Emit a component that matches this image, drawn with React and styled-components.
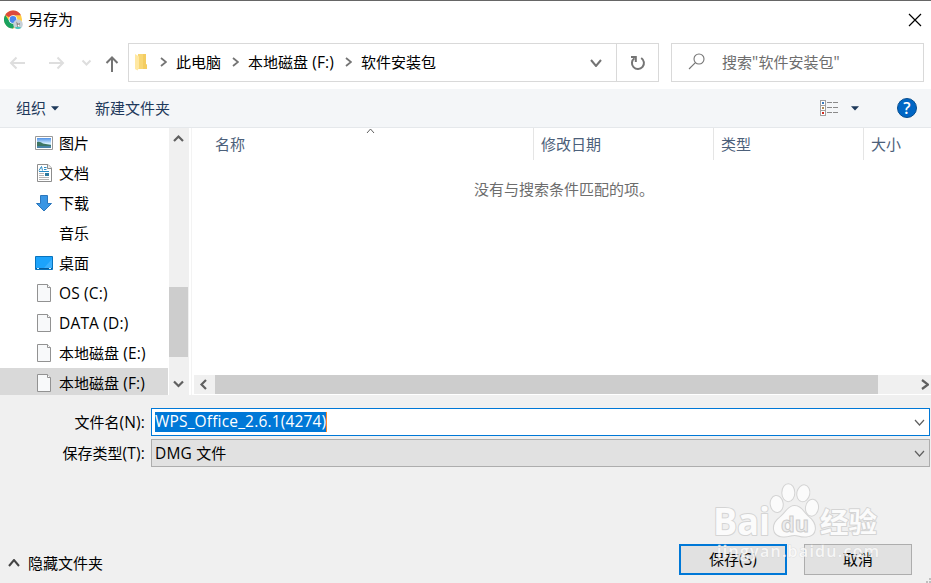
import React from "react";
import styled, { createGlobalStyle } from "styled-components";

const Global = createGlobalStyle`
  * { box-sizing: border-box; }
  body { margin: 0; overflow: hidden; background: #fff; }
  svg { display: block; flex: none; }
`;

const Dialog = styled.div`
  position: relative;
  width: 931px;
  height: 583px;
  display: flex;
  flex-direction: column;
  overflow: hidden;
  border-top: 1px solid #666;
  background: #fff;
  color: #000;
  font: 15px/20px "Open Sans", "Noto Sans CJK SC", sans-serif;
  white-space: nowrap;
`;

const Latin = styled.span`
  font-size: 15.5px;
  line-height: 1;
  letter-spacing: 0.17px;
  white-space: pre;
`;

const TitleBar = styled.header`
  flex: none;
  height: 42px;
  padding: 0 9px 4px 4px;
  display: flex;
  align-items: center;
`;
const Title = styled.span`
  flex: 1;
  margin: 0 0 2px 5px;
`;

const NavBar = styled.nav`
  flex: none;
  height: 46px;
  padding-right: 7px;
  display: flex;
  align-items: flex-start;
`;
const NavArrows = styled.div`
  width: 128px;
  height: 39px;
  flex: none;
`;
const AddressBar = styled.div`
  width: 531px;
  height: 39px;
  border: 1px solid #d9d9d9;
  display: flex;
  align-items: center;
`;
const Crumbs = styled.div`
  flex: 1;
  display: flex;
  align-items: center;
  padding: 0 0 1px 5px;
`;
const Crumb = styled.span`
  width: ${(p) => p.$w}px;
`;
const CrumbArrow = styled.span`
  width: ${(p) => p.$w ?? 23}px;
  padding-left: ${(p) => p.$pad ?? 6.5}px;
`;
const DropArea = styled.div`
  width: 41px;
  display: flex;
  justify-content: center;
`;
const Refresh = styled.div`
  width: 42px;
  height: 37px;
  border-left: 1px solid #d9d9d9;
  display: flex;
  align-items: center;
  justify-content: center;
`;
const SearchBox = styled.div`
  width: 253px;
  height: 39px;
  margin-left: 12px;
  padding: 0 0 2px 16px;
  border: 1px solid #d9d9d9;
  display: flex;
  align-items: center;
  gap: 16px;
  color: #6d6d6d;
`;

const Toolbar = styled.div`
  flex: none;
  height: 39px;
  padding: 0 14px 0 16px;
  display: flex;
  align-items: center;
  background: #f4f6f8;
  border-bottom: 1px solid #e5e8eb;
  color: #1e395b;
`;
const ToolItem = styled.div`
  display: flex;
  align-items: center;
  gap: 5px;
  margin-right: ${(p) => p.$mr ?? 0}px;
`;
const Grow = styled.div`
  flex: 1;
`;

const Body = styled.main`
  flex: none;
  height: 267px;
  display: flex;
  overflow: hidden;
`;
const Tree = styled.ul`
  width: 168px;
  margin: 0;
  padding: 0;
  list-style: none;
`;
const TreeRow = styled.li`
  height: 30px;
  padding-left: 35px;
  display: flex;
  align-items: center;
  background: ${(p) => (p.$selected ? "#d9d9d9" : "transparent")};
`;
const IconSlot = styled.span`
  width: 24px;
`;
const VScroll = styled.div`
  width: 20px;
  margin-left: 1px;
  display: flex;
  flex-direction: column;
  align-items: flex-start;
  justify-content: space-between;
  background: #f0f0f0;
`;
const VThumb = styled.div`
  width: 19px;
  height: 70px;
  margin-top: 120px;
  background: #cdcdcd;
`;
const Pane = styled.section`
  flex: 1;
  margin-left: 2px;
  border-left: 1px solid #f3f3f3;
  display: flex;
  flex-direction: column;
`;
const Columns = styled.div`
  height: 32px;
  display: flex;
  color: #4c607a;
`;
const Column = styled.div`
  position: relative;
  width: ${(p) => p.$w}px;
  padding: 6px 0 0 ${(p) => p.$pad ?? 7}px;
  border-right: ${(p) => (p.$last ? "none" : "1px solid #e5e5e5")};
`;
const SortMark = styled.span`
  position: absolute;
  left: 174px;
  top: 0;
`;
const EmptyNote = styled.p`
  flex: 1;
  margin: 0;
  padding: 19px 0 0 282px;
  color: #6d6d6d;
`;
const HScroll = styled.div`
  height: 19px;
  margin: 0 0 1px 2px;
  display: flex;
  align-items: center;
  background: #f0f0f0;
`;
const HThumb = styled.div`
  width: 663px;
  height: 19px;
  margin: 0 43px 0 6px;
  background: #cdcdcd;
`;

const Footer = styled.footer`
  flex: 1;
  padding: 13px 1px 0 0;
  display: flex;
  flex-direction: column;
  background: #f0f0f0;
`;
const Field = styled.div`
  height: 28px;
  margin-bottom: 3px;
  display: flex;
  align-items: center;
`;
const FieldLabel = styled.label`
  width: 151px;
  padding-right: 6px;
  text-align: right;
`;
const Combo = styled.div`
  flex: 1;
  height: 28px;
  padding: 0 4px 0 3px;
  border: 1px solid ${(p) => (p.$active ? "#0078d7" : "#adadad")};
  background: ${(p) => (p.$active ? "#fff" : "#e1e1e1")};
  display: flex;
  align-items: center;
  justify-content: space-between;
`;
const Selected = styled.span`
  width: 172px;
  height: 20px;
  line-height: 19px;
  margin-bottom: 1px;
  background: #0078d7;
  border-right: 1px solid #ff8728;
  color: #fff;
`;
const Actions = styled.div`
  display: flex;
  align-items: flex-start;
  margin-top: 74px;
  padding-right: 18px;
`;
const HideFolders = styled.div`
  flex: 1;
  display: flex;
  align-items: center;
  gap: 8px;
  padding: 9px 0 0 8px;
`;
const Button = styled.button`
  width: 108px;
  height: 31px;
  margin-left: ${(p) => (p.$primary ? 0 : 17)}px;
  padding: 0 0 1px;
  border: ${(p) => (p.$primary ? "2px solid #0078d7" : "1px solid #adadad")};
  background: #e1e1e1;
  font: inherit;
  color: #000;
`;
const Watermark = styled.svg`
  position: absolute;
  left: 708px;
  top: 476px;
  pointer-events: none;
`;
const Grip = styled.svg`
  position: absolute;
  right: 0;
  bottom: 0;
`;

const Chevron = ({ w = 12, h = 7, color = "#606060", sw = 2, dir = "down" }) => {
  const paths = {
    down: `M1 1L${w / 2} ${h - 1}L${w - 1} 1`,
    up: `M1 ${h - 1}L${w / 2} 1L${w - 1} ${h - 1}`,
    right: `M1 1L${w - 1} ${h / 2}L1 ${h - 1}`,
    left: `M${w - 1} 1L1 ${h / 2}L${w - 1} ${h - 1}`,
  };
  return (
    <svg width={w} height={h}>
      <path d={paths[dir]} fill="none" stroke={color} strokeWidth={sw} />
    </svg>
  );
};

const Caret = () => (
  <svg width="8" height="5"><path d="M0 .3H8L4 4.6Z" fill="#1e395b" /></svg>
);

const ChromeIcon = () => (
  <svg width="19" height="20" viewBox="0 0 19 20">
    <circle cx="9" cy="9.5" r="9" fill="#ffcd42" />
    <path d="M9 9.5L1.2 5A9 9 0 0 1 17 5.3H9Z" fill="#dc4a3e" />
    <path d="M1.2 5A9 9 0 0 0 9 18.5L12.5 12L5.3 11Z" fill="#1aa260" />
    <circle cx="9" cy="9.5" r="4.3" fill="#fff" />
    <circle cx="9" cy="9.5" r="3.4" fill="#4a86ee" />
    <circle cx="14" cy="14.4" r="4.8" fill="#c7d0d8" />
    <path d="M10.5 17.7Q14 15.8 17.4 17.7Q14 20.5 10.5 17.7" fill="#46c6bd" />
    <path d="M12.2 11.5l2 2.2 1.8-.8-.6 3.6-2.2.4Z" fill="#8b827b" />
    <path d="M13.6 15l1.6-.5.3 2h-1.6Z" fill="#fff" />
  </svg>
);

const NavIcons = () => (
  <svg width="128" height="39" fill="none" strokeWidth="2">
    <g stroke="#dedede">
      <path d="M11 20H25M16.5 14.5L11 20L16.5 25.5" />
      <path d="M49 20H63M57.5 14.5L63 20L57.5 25.5" />
      <path d="M82.5 17.5L86.5 21.5L90.5 17.5" />
    </g>
    <path d="M112 29V15M106.5 20L112 14.5L117.5 20" stroke="#747474" />
  </svg>
);

const FolderIcon = () => (
  <svg width="13" height="18">
    <path d="M4 1H12V11L13 12V16H4Z" fill="#f8d775" />
    <path d="M9 1H12V11L13 12V16H9Z" fill="#f4cd62" />
    <path d="M1 1L5 3.5V15L3.5 17.5L1 16Z" fill="#ffe8a2" />
  </svg>
);

const RefreshIcon = () => (
  <svg width="16" height="16" fill="none" stroke="#747474" strokeWidth="2">
    <path d="M11.2 3A6 6 0 1 1 4.4 3.2" />
    <path d="M1 2H5.8V7" />
  </svg>
);

const SearchIcon = () => (
  <svg width="18" height="17" fill="none" stroke="#757575" strokeWidth="1.1">
    <circle cx="11" cy="6" r="5" />
    <path d="M7.4 9.6L1 16" />
  </svg>
);

const ViewIcon = () => (
  <svg width="18" height="16" shapeRendering="crispEdges">
    <path d="M.5.5H5.5V15.5H.5ZM.5 5.5H5.5M.5 10.5H5.5" fill="#fff" stroke="#a0a0a0" />
    <path d="M7 2.5H12M13 2.5H18M7 7.5H12M13 7.5H18M7 12.5H12M13 12.5H18" stroke="#8a8a8a" />
    <path d="M2 2H4V4H2Z" fill="#3879bd" />
    <path d="M2 7H4V9H2Z" fill="#b08b55" />
    <path d="M2 12H4V14H2Z" fill="#d02a1e" />
  </svg>
);

const HelpIcon = () => (
  <svg width="20" height="20">
    <circle cx="10" cy="10" r="9.5" fill="#0066c5" stroke="#064d8e" />
    <text x="10" y="15.5" textAnchor="middle" fontSize="16" fontWeight="600" fill="#fff">?</text>
  </svg>
);

const PictureIcon = () => (
  <svg width="18" height="14">
    <defs>
      <linearGradient id="sky" x2="0" y2="1">
        <stop stopColor="#4f91e6" /><stop offset=".55" stopColor="#d5efff" /><stop offset="1" stopColor="#6aa3c9" />
      </linearGradient>
    </defs>
    <path d="M.5.5H17.5V13.5H.5Z" fill="#fff" stroke="#999" />
    <path d="M2 2H16V12H2Z" fill="url(#sky)" />
    <path d="M2 6Q5 5 8 7.5L16 9V10H2Z" fill="#3d7663" />
    <path d="M2 10H16V12H2Z" fill="#4783a8" />
  </svg>
);

const DocIcon = () => (
  <svg width="18" height="18">
    <path d="M2.5.5H13L16.5 4V17.5H2.5Z" fill="#fff" stroke="#8d8d8d" />
    <path d="M12.5.5V4.5H16.5" fill="#eee" stroke="#8d8d8d" />
    <path d="M4 6.5L6.5 2.5L7.5 6.5M9 3.5H11.5M9 5.5H11.5M4 7.5H14" fill="none" stroke="#2a8bc4" />
    <path d="M4 9.5H9M4 11.5H9M4 13.5H14M4 15.5H14" stroke="#b5b5b5" />
    <path d="M10 9H14V12H10Z" fill="#2e7a9f" />
  </svg>
);

const DownloadIcon = () => (
  <svg width="18" height="18">
    <path d="M5.5 1.5H12.5V9.5H16.5L9 17L1.5 9.5H5.5Z" fill="#3a96e4" stroke="#2b77bd" />
  </svg>
);

const DesktopIcon = () => (
  <svg width="18" height="14">
    <path d="M.5.5H17.5V13.5H.5Z" fill="#1ca3fb" stroke="#0873bd" />
    <path d="M9 12L17 3V12Z" fill="#3bb0fd" />
    <path d="M1 12.5H17" stroke="#075c9c" />
    <path d="M2 12.5H4M14 12.5H16" stroke="#d9f1ff" />
  </svg>
);

const FileIcon = () => (
  <svg width="18" height="18">
    <path d="M2.5.5H12.5L15.5 3.5V17.5H2.5Z" fill="#f8f9fa" stroke="#929292" />
    <path d="M12.5.5V3.5H15.5" fill="#fff" stroke="#929292" />
  </svg>
);

const places = [
  { text: "图片", icon: PictureIcon },
  { text: "文档", icon: DocIcon },
  { text: "下载", icon: DownloadIcon },
  { text: "音乐" },
  { text: "桌面", icon: DesktopIcon },
  { latin: "OS (C:)", icon: FileIcon },
  { latin: "DATA (D:)", icon: FileIcon },
  { text: "本地磁盘", latin: " (E:)", icon: FileIcon },
  { text: "本地磁盘", latin: " (F:)", icon: FileIcon, selected: true },
];

const Brand = () => (
  <Watermark width="180" height="92" fontFamily="Open Sans, Noto Sans CJK SC, sans-serif">
    <g fill="#fbfbfb" stroke="#d4d4d4" strokeWidth="2" paintOrder="stroke" strokeLinejoin="round">
      <text x="5" y="58" fontSize="37" fontWeight="700" textLength="57" lengthAdjust="spacingAndGlyphs">Bai</text>
      <ellipse cx="68.7" cy="27" rx="6" ry="8" transform="rotate(-8 68.7 27)" />
      <ellipse cx="80.300" cy="15.700" rx="6" ry="8.500" />
      <ellipse cx="95.300" cy="16.300" rx="6" ry="8" transform="rotate(12 95.300 16.300)" />
      <ellipse cx="104" cy="30.700" rx="6" ry="8" transform="rotate(8 104 30.700)" />
      <path d="M86.500 29C93 29 95 35 100 39.500C110 47 109 59 98 59.500C93 60 90 58 86.500 58C82 58 80 60 75 59.500C64 59 63 47 72 40.500C78 36 80 29 86.500 29Z" />
      <text x="112" y="56" fontSize="28" fontWeight="700" textLength="57" lengthAdjust="spacingAndGlyphs">经验</text>
    </g>
    <text x="73" y="54.500" fontSize="22" fontWeight="700" fill="#ececec" stroke="#cccccc" textLength="28" lengthAdjust="spacingAndGlyphs">du</text>
    <text x="9" y="80" fontSize="16" fontWeight="600" fill="#fff" fillOpacity=".75" stroke="#d4d4d4" strokeOpacity=".6" strokeWidth="1" paintOrder="stroke" textLength="162">jingyan.baidu.com</text>
  </Watermark>
);

export default function App() {
  return (
    <Dialog>
      <Global />
      <TitleBar>
        <ChromeIcon />
        <Title>另存为</Title>
        <svg width="14" height="14"><path d="M1 1L13 13M13 1L1 13" stroke="#000" strokeWidth="1.2" /></svg>
      </TitleBar>

      <NavBar>
        <NavArrows><NavIcons /></NavArrows>
        <AddressBar>
          <Crumbs>
            <FolderIcon />
            <CrumbArrow $w={29} $pad={12.5}><Chevron w={7} h={10} dir="right" color="#747474" sw={1.8} /></CrumbArrow>
            <Crumb $w={49}>此电脑</Crumb>
            <CrumbArrow><Chevron w={7} h={10} dir="right" color="#747474" sw={1.8} /></CrumbArrow>
            <Crumb $w={90}>本地磁盘<Latin> (F:)</Latin></Crumb>
            <CrumbArrow><Chevron w={7} h={10} dir="right" color="#747474" sw={1.8} /></CrumbArrow>
            <span>软件安装包</span>
          </Crumbs>
          <DropArea><Chevron color="#747474" h={8} /></DropArea>
          <Refresh><RefreshIcon /></Refresh>
        </AddressBar>
        <SearchBox><SearchIcon /><span>搜索<Latin>"</Latin>软件安装包<Latin>"</Latin></span></SearchBox>
      </NavBar>

      <Toolbar>
        <ToolItem $mr={36}>组织 <Caret /></ToolItem>
        <ToolItem>新建文件夹</ToolItem>
        <Grow />
        <ToolItem $mr={13}><ViewIcon /></ToolItem>
        <ToolItem $mr={38}><Caret /></ToolItem>
        <HelpIcon />
      </Toolbar>

      <Body>
        <Tree>
          {places.map(({ text, latin, icon: Icon, selected }) => (
            <TreeRow key={(text || "") + (latin || "")} $selected={selected}>
              <IconSlot>{Icon && <Icon />}</IconSlot>
              <span>{text}{latin && <Latin>{latin}</Latin>}</span>
            </TreeRow>
          ))}
        </Tree>
        <VScroll>
          <svg width="19" height="20"><path d="M5 13L9.500 8.500L14 13" fill="none" stroke="#606060" strokeWidth="2.200" /></svg>
          <VThumb />
          <svg width="19" height="20"><path d="M5 6.500L9.500 11L14 6.500" fill="none" stroke="#606060" strokeWidth="2.200" /></svg>
        </VScroll>
        <Pane>
          <Columns>
            <Column $w={342} $pad={23}>
              名称
              <SortMark><Chevron w={9} h={6} dir="up" sw={1} /></SortMark>
            </Column>
            <Column $w={180}>修改日期</Column>
            <Column $w={150}>类型</Column>
            <Column $w={67} $last>大小</Column>
          </Columns>
          <EmptyNote>没有与搜索条件匹配的项。</EmptyNote>
          <HScroll>
            <svg width="15" height="19"><path d="M12 5L7.500 9.500L12 14" fill="none" stroke="#606060" strokeWidth="2.200" /></svg>
            <HThumb />
            <Chevron w={8} h={11} dir="right" sw={2.2} />
          </HScroll>
        </Pane>
      </Body>

      <Footer>
        <Field>
          <FieldLabel>文件名<Latin>(N):</Latin></FieldLabel>
          <Combo $active>
            <Selected><Latin>WPS_Office_2.6.1(4274)</Latin></Selected>
            <Chevron w={11} h={7} sw={1.2} />
          </Combo>
        </Field>
        <Field>
          <FieldLabel>保存类型<Latin>(T):</Latin></FieldLabel>
          <Combo><span><Latin>DMG </Latin>文件</span><Chevron w={11} h={7} sw={1.2} /></Combo>
        </Field>
        <Actions>
          <HideFolders><Chevron dir="up" h={8} color="#444" />隐藏文件夹</HideFolders>
          <Button $primary>保存<Latin>(S)</Latin></Button>
          <Button>取消</Button>
        </Actions>
      </Footer>
      <Brand />
      <Grip width="5" height="5"><path d="M3 0H5V2H3ZM0 3H2V5H0ZM3 3H5V5H3Z" fill="#bfbfbf" /></Grip>
    </Dialog>
  );
}
